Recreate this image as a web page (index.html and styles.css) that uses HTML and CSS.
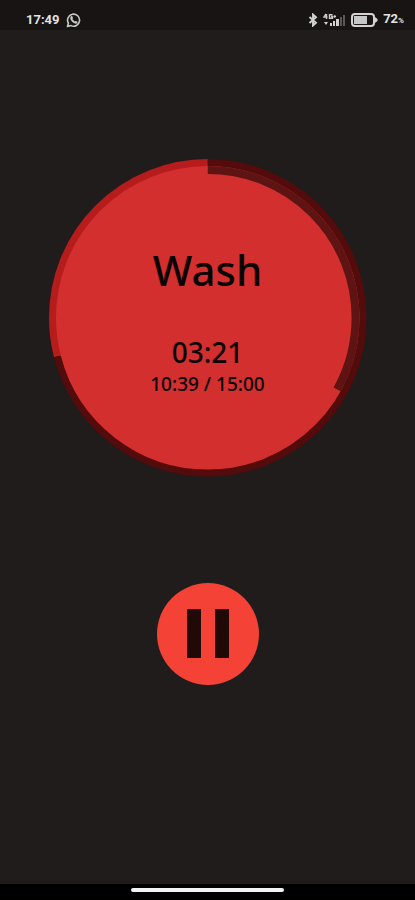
FILE: index.html
```html
<!DOCTYPE html>
<html lang="en">
<head>
<meta charset="utf-8">
<meta name="viewport" content="width=device-width, initial-scale=1">
<title>Wash</title>
<link rel="stylesheet" href="styles.css">
</head>
<body>
<header class="status">
  <div class="status-group status-left">
    <span>17:49</span>
    <svg viewBox="0 0 16 16" width="16" height="16" aria-hidden="true">
      <path d="M1.5 14.5 2.4 11.2A6 6 0 1 1 5 13.6Z" fill="none" stroke="#c9c9c9" stroke-width="1.6" stroke-linejoin="round"/>
      <path d="M5 4 6.4 4.3 7 6.2 6.4 7.2 8.8 9.5 9.8 9 11.6 9.8 11.3 11.2 9.8 11.8C7 11.200 4.600 8.800 4.100 6Z" fill="#c9c9c9"/>
    </svg>
  </div>
  <div class="status-group">
    <svg viewBox="0 0 10 14" width="10" height="14" aria-hidden="true">
      <path d="M1.5 4 8 9.8 5 12.5V1.5L8 4.2 1.5 10" fill="none" stroke="#d2d2d2" stroke-width="1.9"/>
    </svg>
    <svg viewBox="0 0 23 14" width="23" height="14" aria-hidden="true">
      <path d="M3 1 1 4H4.5M3.5 1V6M9.500 1.800H6.500V5.200H9.500V3.500H8M10.500 3.500H13M11.700 2.200V4.800" fill="none" stroke="#c9c9c9" stroke-width="1.400"/>
      <path d="M1 9H5L3 12ZM7 10H9V13H7ZM10 8H12V13H10ZM13 6H16V13H13Z" fill="#d2d2d2"/>
      <path d="M17 4H19V13H17ZM20 2H22V13H20Z" fill="#595654"/>
    </svg>
    <svg viewBox="0 0 27 14" width="27" height="14" aria-hidden="true">
      <rect x="1" y="1" width="22" height="12" rx="3" fill="none" stroke="#d2d2d2" stroke-width="2"/>
      <rect x="3" y="3" width="13" height="8" fill="#c6c6c6"/>
      <path d="M24 4 26.5 6V8L24 10Z" fill="#d2d2d2"/>
    </svg>
    <span>72<small class="percent">%</small></span>
  </div>
</header>
<main class="timer">
  <section class="dial">
    <svg class="ring" viewBox="0 0 320 320" aria-hidden="true">
      <circle cx="160" cy="160" r="154" fill="#d32f2f"/>
      <circle class="arc rest" cx="160" cy="160" r="155.5" pathLength="360"/>
      <circle class="arc total" cx="160" cy="160" r="155.5" pathLength="360"/>
      <circle class="arc step" cx="160" cy="160" r="148" pathLength="360"/>
    </svg>
    <div class="readout">
      <h1 class="name">Wash</h1>
      <p class="remaining">03:21</p>
      <p class="elapsed">10:39 / 15:00</p>
    </div>
  </section>
  <button class="pause" type="button" aria-label="Pause">
    <svg viewBox="0 0 42 49" width="42" height="49" aria-hidden="true">
      <path d="M0 0H14V49H0ZM28 0H42V49H28Z" fill="#210908"/>
    </svg>
  </button>
</main>
<footer class="nav"><div class="handle"></div></footer>
</body>
</html>
```
FILE: styles.css
```css
* { box-sizing: border-box; }
body {
  margin: 0;
  min-height: 100vh;
  display: flex;
  flex-direction: column;
  background: #1f1c1b;
  font-family: "Noto Sans", sans-serif;
}
.status {
  height: 30px;
  padding: 10px 11px 0 26px;
  display: flex;
  justify-content: space-between;
  align-items: center;
  background: #181413;
  color: #e2e2e2;
  font: 700 13px/20px Roboto, sans-serif;
}
.status-group { display: flex; align-items: center; gap: 5px; }
.status-left { gap: 6px; }
.percent { font-size: 8px; }
.timer {
  flex: 1;
  display: flex;
  flex-direction: column;
  align-items: center;
  padding: 128px 0 48px;
  gap: 105px;
}
.dial {
  width: 77%;
  aspect-ratio: 1;
  display: grid;
}
.ring, .readout { grid-area: 1 / 1; }
.ring { width: 100%; height: 100%; }
.arc {
  fill: none;
  stroke-width: 7;
  transform: rotate(-90deg);
  transform-origin: center;
}
.rest { stroke: #b71c1c; stroke-dasharray: 0 255.6 104.4 0; }
.total { stroke: #530b0b; stroke-dasharray: 255.6 360; }
.step { stroke: #5f1414; stroke-width: 8; stroke-dasharray: 119 360; }
.readout {
  z-index: 1;
  align-self: center;
  padding-top: 4px;
  text-align: center;
  color: #0b0202;
}
.name, .remaining, .elapsed { margin: 0; font-weight: 500; }
.name { font-size: 42px; line-height: 56px; margin-bottom: 36px; }
.remaining { font-size: 28px; line-height: 36px; }
.elapsed { font-size: 19px; line-height: 28px; }
.pause {
  width: 102px;
  height: 102px;
  padding: 0;
  border: 0;
  border-radius: 50%;
  background: #f44336;
  display: grid;
  place-items: center;
}
.nav {
  height: 16px;
  background: #000;
  display: flex;
  justify-content: center;
  padding-top: 4px;
}
.handle {
  width: 37%;
  height: 4px;
  border-radius: 2px;
  background: #f2f2f2;
}
```
